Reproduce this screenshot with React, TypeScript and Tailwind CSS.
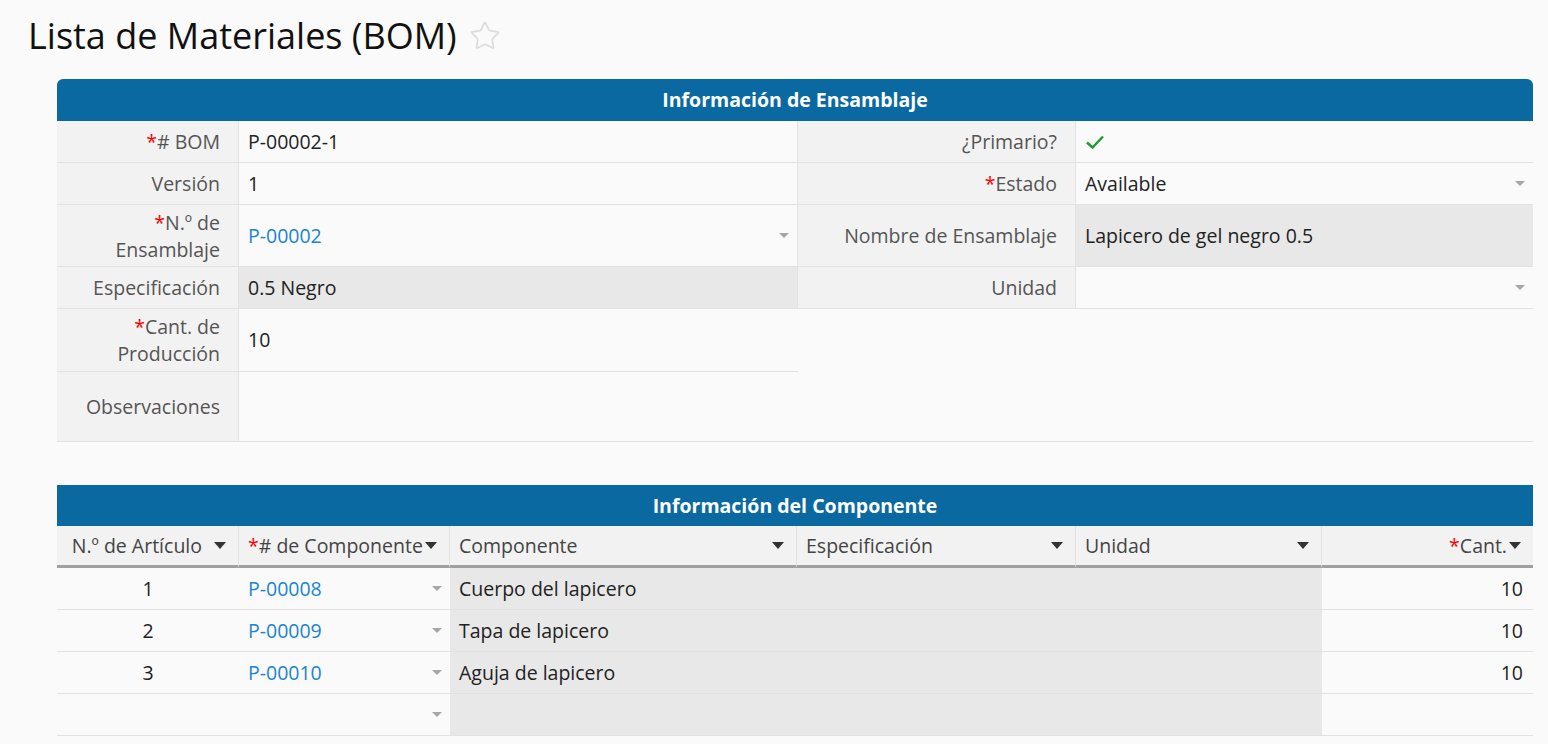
import { Star } from "lucide-react";

const font = { fontFamily: '"Open Sans", "Noto Sans", sans-serif' };

function Req() {
  return <span className="text-[#ff0000]">*</span>;
}

function GrayArrow() {
  return (
    <svg width="10" height="6" viewBox="0 0 10 6" className="shrink-0">
      <path d="M0 0 H10 L5 5 Z" fill="#a6a6a6" />
    </svg>
  );
}

function DarkArrow() {
  return (
    <svg width="12" height="7" viewBox="0 0 12 7" className="shrink-0">
      <path d="M0 0 H12 L6 7 Z" fill="#333333" />
    </svg>
  );
}

function Check() {
  return (
    <svg width="20" height="16" viewBox="0 0 20 16">
      <path d="M2 8.5 L7.5 13.5 L18 2.5" fill="none" stroke="#1f9a2f" strokeWidth="2.4" />
    </svg>
  );
}

const label =
  "bg-[#f2f2f2] border-b border-r border-[#e2e2e2] flex items-center justify-end text-right pr-[18px] pl-3 text-[#555] leading-[27px]";
const value = "border-b border-r border-[#e2e2e2] flex items-center px-[9px] text-[#222]";

type Row = { n: string; code: string; name: string };

const rows: Row[] = [
  { n: "1", code: "P-00008", name: "Cuerpo del lapicero" },
  { n: "2", code: "P-00009", name: "Tapa de lapicero" },
  { n: "3", code: "P-00010", name: "Aguja de lapicero" },
];

export default function App() {
  return (
    <div className="w-full min-h-screen bg-[#fafafa] text-[19.5px]" style={font}>
      {/* TITLE */}
      <div className="pl-[28px] pt-[14px] flex items-center gap-3">
        <h1 className="text-[36px] leading-[44px] text-[#111]">Lista de Materiales (BOM)</h1>
        <Star size={32} strokeWidth={1.3} className="text-[#dcdcdc]" />
      </div>

      {/* ASSEMBLY INFO */}
      <div className="ml-[57px] mr-[15px] mt-[21px]">
        <div className="h-[42px] rounded-t-[6px] bg-[#0b69a1] text-white font-bold flex items-center justify-center">
          Información de Ensamblaje
        </div>
        <div className="grid grid-cols-[182px_559px_278px_1fr]">
          <div className={`${label} h-[42px]`}>
            <span>
              <Req /># BOM
            </span>
          </div>
          <div className={`${value} h-[42px]`}>P-00002-1</div>
          <div className={`${label} h-[42px]`}>¿Primario?</div>
          <div className={`${value} h-[42px] border-r-0`}>
            <Check />
          </div>

          <div className={`${label} h-[42px]`}>Versión</div>
          <div className={`${value} h-[42px]`}>1</div>
          <div className={`${label} h-[42px]`}>
            <span>
              <Req />Estado
            </span>
          </div>
          <div className={`${value} h-[42px] border-r-0 justify-between pr-[8px]`}>
            <span>Available</span>
            <GrayArrow />
          </div>

          <div className={`${label} h-[62px]`}>
            <span>
              <Req />N.º de
              <br />
              Ensamblaje
            </span>
          </div>
          <div className={`${value} h-[62px] justify-between pr-[8px]`}>
            <span className="text-[#1a84d1]">P-00002</span>
            <GrayArrow />
          </div>
          <div className={`${label} h-[62px]`}>Nombre de Ensamblaje</div>
          <div className={`${value} h-[62px] border-r-0 bg-[#e8e8e8]`}>Lapicero de gel negro 0.5</div>

          <div className={`${label} h-[42px]`}>Especificación</div>
          <div className={`${value} h-[42px] bg-[#e8e8e8]`}>0.5 Negro</div>
          <div className={`${label} h-[42px]`}>Unidad</div>
          <div className={`${value} h-[42px] border-r-0 justify-end pr-[8px]`}>
            <GrayArrow />
          </div>

          <div className={`${label} h-[63px]`}>
            <span>
              <Req />Cant. de
              <br />
              Producción
            </span>
          </div>
          <div className={`${value} h-[63px] border-r-0`}>10</div>
          <div className="col-span-2" />

          <div className={`${label} h-[70px]`}>Observaciones</div>
          <div className="col-span-3 h-[70px] border-b border-[#e2e2e2]" />
        </div>
      </div>

      {/* COMPONENT INFO */}
      <div className="ml-[57px] mr-[15px] mt-[43px]">
        <div className="h-[41px] bg-[#0b69a1] text-white font-bold flex items-center justify-center">
          Información del Componente
        </div>
        <div className="grid grid-cols-[182px_211px_347px_279px_246px_1fr]">
          {/* header row */}
          <div className="h-[42px] bg-[#f2f2f2] border-r border-[#e2e2e2] border-b-[3px] border-b-[#a0a0a0] flex items-center justify-end gap-3 pr-3 text-[#444]">
            <span>N.º de Artículo</span>
            <DarkArrow />
          </div>
          <div className="h-[42px] bg-[#f2f2f2] border-r border-[#e2e2e2] border-b-[3px] border-b-[#a0a0a0] flex items-center justify-between pl-[9px] pr-3 text-[#444]">
            <span>
              <Req /># de Componente
            </span>
            <DarkArrow />
          </div>
          <div className="h-[42px] bg-[#f2f2f2] border-r border-[#e2e2e2] border-b-[3px] border-b-[#a0a0a0] flex items-center justify-between pl-[9px] pr-3 text-[#444]">
            <span>Componente</span>
            <DarkArrow />
          </div>
          <div className="h-[42px] bg-[#f2f2f2] border-r border-[#e2e2e2] border-b-[3px] border-b-[#a0a0a0] flex items-center justify-between pl-[9px] pr-3 text-[#444]">
            <span>Especificación</span>
            <DarkArrow />
          </div>
          <div className="h-[42px] bg-[#f2f2f2] border-r border-[#e2e2e2] border-b-[3px] border-b-[#a0a0a0] flex items-center justify-between pl-[9px] pr-3 text-[#444]">
            <span>Unidad</span>
            <DarkArrow />
          </div>
          <div className="h-[42px] bg-[#f2f2f2] border-b-[3px] border-b-[#a0a0a0] flex items-center justify-end gap-[2px] pr-3 text-[#444]">
            <span>
              <Req />Cant.
            </span>
            <DarkArrow />
          </div>

          {/* data rows */}
          {[...rows, { n: "", code: "", name: "" }].map((r, i) => (
            <div key={i} className="contents">
              <div className="h-[42px] border-b border-[#e2e2e2] flex items-center justify-center text-[#222]">
                {r.n}
              </div>
              <div className="h-[42px] border-b border-[#e2e2e2] flex items-center justify-between pl-[9px] pr-[8px]">
                <span className="text-[#1a84d1]">{r.code}</span>
                <GrayArrow />
              </div>
              <div className="h-[42px] bg-[#e8e8e8] border-b border-[#e2e2e2] flex items-center pl-[9px] text-[#222]">
                {r.name}
              </div>
              <div className="h-[42px] bg-[#e8e8e8] border-b border-[#e2e2e2]" />
              <div className="h-[42px] bg-[#e8e8e8] border-b border-[#e2e2e2]" />
              <div className="h-[42px] border-b border-[#e2e2e2] flex items-center justify-end pr-[10px] text-[#222]">
                {r.n ? "10" : ""}
              </div>
            </div>
          ))}
        </div>
      </div>
    </div>
  );
}
